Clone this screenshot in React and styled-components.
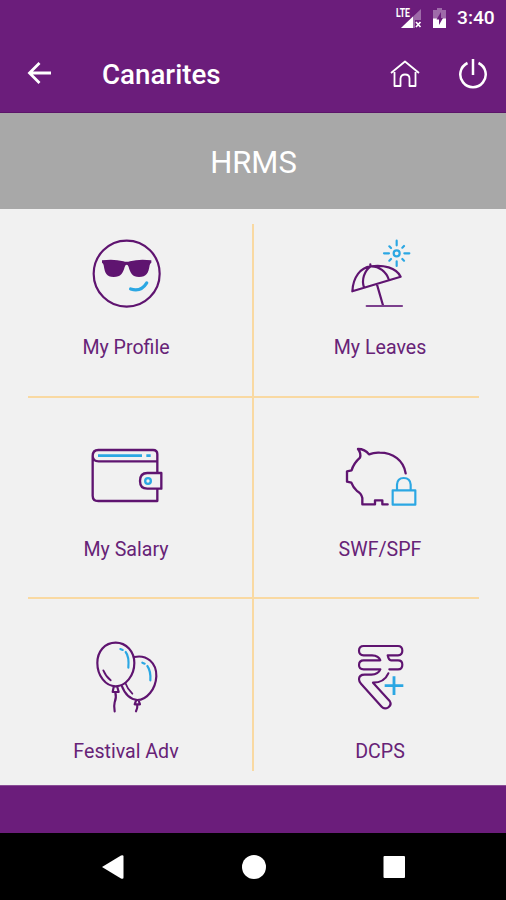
import React from 'react'
import styled, { createGlobalStyle } from 'styled-components';

const purple = '#6b1d7b';
const ink = '#5f1470';
const blue = '#2ba7e3';

const GlobalStyle = createGlobalStyle`
    * {
        box-sizing: border-box;
    }
    body {
        margin: 0;
        background: #000;
        font-family: Roboto, "Liberation Sans", sans-serif;
    }
    svg {
        display: block;
        flex-shrink: 0;
    }
`;

const Screen = styled.div`
    width: 506px;
    height: 900px;
    display: flex;
    flex-direction: column;
    overflow: hidden;
    background: #f1f1f1;
`;

const StatusBar = styled.div`
    height: 36px;
    display: flex;
    justify-content: flex-end;
    align-items: center;
    padding-right: 11px;
    background: ${purple};
    color: #fff;
`;

const Clock = styled.span`
    width: 38px;
    margin-left: 9px;
    font-size: 19.2px;
    font-weight: 500;
    line-height: 36px;
    white-space: nowrap;
`;

const AppBar = styled.header`
    height: 77px;
    display: flex;
    align-items: center;
    padding: 0 18px 0 24px;
    background: ${purple};
    border-bottom: 1px solid #5c1569;
    color: #fff;
`;

const AppTitle = styled.h1`
    flex: 1;
    margin: 0 0 0 48px;
    padding-top: 2px;
    font-size: 27.7px;
    font-weight: 500;
    line-height: 32px;
`;

const Actions = styled.div`
    display: flex;
    align-items: center;
    gap: 38px;
`;

const Banner = styled.h2`
    height: 96px;
    margin: 0;
    padding: 2px 0 0 1px;
    display: flex;
    align-items: center;
    justify-content: center;
    background: #a8a8a8;
    color: #fff;
    font-size: 31px;
    font-weight: 400;
`;

const Menu = styled.main`
    height: 576px;
    padding: 15px 0 14px;
    background: #f1f1f1;
`;

const Row = styled.div`
    display: flex;
    height: ${(p) => p.$height}px;
`;

const Divider = styled.div`
    height: 2px;
    margin: 0 27px 0 28px;
    background: #f9d9a2;
`;

const Cell = styled.div`
    width: ${(p) => (p.$line ? 254 : 252)}px;
    display: flex;
    flex-direction: column;
    align-items: center;
    gap: ${(p) => p.$gap}px;
    padding-top: ${(p) => p.$top}px;
    border-right: ${(p) => (p.$line ? '2px solid #f9d9a2' : 'none')};
`;

const Label = styled.span`
    color: #672377;
    font-size: 19.6px;
    line-height: 26px;
    white-space: nowrap;
`;

const Footer = styled.div`
    height: 48px;
    background: ${purple};
    border-top: 1px solid #8a4d96;
`;

const NavBar = styled.nav`
    flex: 1;
    display: flex;
    justify-content: space-between;
    align-items: center;
    padding: 0 101px 0 102px;
    background: #000;
`;

const Art = ({ x = 0, children }) => (
    <svg width="120" height="80" viewBox={`${x} 30 360 240`} fill="none" stroke={ink} strokeWidth="6.5" strokeLinejoin="round" strokeLinecap="round">
        {children}
    </svg>
)

const Profile = () => (
    <Art x={-12}>
        <circle cx="170" cy="146" r="99" />
        <path fill={ink} stroke="none" d="M96 106 Q132 101 160 109 Q170 112 180 109 Q208 101 244 106 L244 113 Q240 115 239 121 C235 145 230 156 207 156 C187 156 181 144 176 126 Q174 119 170 119 Q166 119 164 126 C159 144 153 156 131 156 C109 156 105 145 101 121 Q100 115 96 113Z" />
        <path stroke={blue} strokeWidth="10" d="M182 192 Q213 202 230 174" />
    </Art>
)

const Leaves = () => (
    <Art>
        <path d="M97 199 C99 156 122 127 152 124 C190 119 228 127 242 155 Z M151 118 V124 M152 124 C133 138 124 163 132 188 M152 124 C177 123 199 140 207 165 M171 179 L189 241" />
        <path stroke="#7c408d" d="M140 243 H246" />
        <g stroke={blue} strokeWidth="6.5">
            <circle cx="230" cy="85" r="9" />
            <path d="M230 47 V61 M230 109 V123 M192 85 H207 M253 85 H268 M208 64 L213 69 M252 63 L247 68 M208 107 L213 102 M252 107 L247 102" />
        </g>
    </Art>
)

const Salary = () => (
    <Art x={-12}>
        <path strokeWidth="7" d="M262 128 V73 Q262 60 249 60 H85 Q68 60 68 78 V197 Q68 213 85 213 H262 V177 M68 78 Q69 94 86 94 H262 M274 129 H232 Q210 129 210 153 Q210 176 232 176 H274 Z" />
        <path stroke={blue} strokeWidth="8" strokeLinecap="butt" d="M84 77 H216 M229 77 H242" />
        <circle cx="234" cy="153" r="8.5" stroke={blue} strokeWidth="7" />
    </Art>
)

const Fund = () => (
    <Art>
        <path strokeWidth="7" d="M257 130 C251 91 219 68 179 68 Q162 67 147 73 Q135 57 114 57 Q124 70 120 83 Q100 101 95 121 L81 124 V155 L94 158 Q99 172 111 183 Q124 190 127 204 V223 H165 V211 H187 V223 H203" />
        <g stroke={blue} strokeWidth="6.5">
            <rect x="218" y="181" width="68" height="43" />
            <path d="M231 180 V164 Q232 144 251 144 Q271 144 272 164 V180" />
        </g>
    </Art>
)

const Festival = () => (
    <Art x={18}>
        <path d="M167 38 C134 38 112 65 112 99 C112 137 137 169 167 169 C197 169 223 137 223 99 C223 65 199 38 167 38Z M161 171 L158 186 H176 L172 171 M166 187 Q170 203 164 217 Q161 228 164 244" />
        <path d="M223 81 C260 73 290 98 289 139 C287 178 260 210 232 210 C207 208 193 188 185 167 M228 212 L224 223 H240 L236 212 M232 224 Q233 234 228 244" />
        <path strokeWidth="5.5" d="M130 121 Q138 140 152 151 M196 159 Q203 178 217 191" />
        <path stroke={blue} d="M181 57 L188 60 M197 66 Q208 80 205 113 M247 98 L254 101 M262 108 Q273 123 271 151" />
    </Art>
)

const Rupee = () => (
    <Art>
        <path d="M208 118 H234 Q247 118 247 104 Q247 91 234 91 H213 Q206 91 203 76 H234 Q247 75 247 62 Q247 48 234 48 H131 Q117 48 117 62 Q117 75 131 76 H156 Q177 77 181 91 H131 Q117 91 117 105 Q117 118 131 118 H181 Q175 133 154 134 H134 Q117 134 117 148 Q117 155 123 161 L185 230 Q193 239 205 232 Q216 224 209 213 L159 158 Q193 158 205 130" />
        <path stroke={blue} strokeWidth="8.5" strokeLinecap="butt" d="M194 167 H250 M222 139 V195" />
    </Art>
)

const App = () => {
    return (
        <Screen>
            <GlobalStyle />
            <StatusBar>
                <svg width="53" height="24" viewBox="0 0 53 24" fill="#fff">
                    <text x="1" y="10.5" fontSize="12" fontWeight="700" textLength="14" lengthAdjust="spacingAndGlyphs">LTE</text>
                    <path opacity=".35" d="M26 3 V14 H20 V22 H6Z" />
                    <path d="M18 10.5 V22 H6Z" />
                    <path stroke="#fff" strokeWidth="1.7" d="M21 16 L25.5 21 M25.5 16 L21 21" />
                    <path opacity=".35" d="M38 4 H42 V2 H47 V4 H51 V13 H38Z" />
                    <path d="M38 12.5 H51 V22 H38Z" />
                    <path fill={purple} d="M46 6 L41.500 13.500 H44 V19 L48 12 H46Z" />
                </svg>
                <Clock>3:40</Clock>
            </StatusBar>
            <AppBar>
                <svg width="30" height="30" viewBox="0 0 30 30" fill="none" stroke="#fff" strokeWidth="2.8">
                    <path d="M27 14 H5.500 M15.500 4 L5.500 14 L15.500 24" />
                </svg>
                <AppTitle>Canarites</AppTitle>
                <Actions>
                    <svg width="30" height="30" viewBox="0 0 30 30" fill="none" stroke="#fff" strokeWidth="1.8" strokeLinejoin="round">
                        <path d="M1 14 L15 2.5 L29 14 M4.5 13 V27 H10.5 V19.5 Q11 15.5 15 15.5 Q19.500 15.5 19.5 19.5 V27 H25.500 V13" />
                    </svg>
                    <svg width="30" height="30" viewBox="0 0 30 30" fill="none" stroke="#fff" strokeWidth="2.5">
                        <path d="M9.500 4 A12.7 12.7 0 1 0 20.500 4 M15 0 V16" />
                    </svg>
                </Actions>
            </AppBar>
            <Banner>HRMS</Banner>
            <Menu>
                <Row $height={172}>
                    <Cell $line $top={11} $gap={20}><Profile /><Label>My Profile</Label></Cell>
                    <Cell $top={11} $gap={20}><Leaves /><Label>My Leaves</Label></Cell>
                </Row>
                <Divider />
                <Row $height={199}>
                    <Cell $line $top={42} $gap={17}><Salary /><Label>My Salary</Label></Cell>
                    <Cell $top={42} $gap={17}><Fund /><Label>SWF/SPF</Label></Cell>
                </Row>
                <Divider />
                <Row $height={172}>
                    <Cell $line $top={41} $gap={19}><Festival /><Label>Festival Adv</Label></Cell>
                    <Cell $top={41} $gap={19}><Rupee /><Label>DCPS</Label></Cell>
                </Row>
            </Menu>
            <Footer />
            <NavBar>
                <svg width="22" height="26" viewBox="0 0 22 26" fill="#fff"><path d="M0 13 L19 1.500 Q21.500 0.500 21.500 2.500 V23.500 Q21.500 25.500 19 24.500Z" /></svg>
                <svg width="24" height="24" viewBox="0 0 24 24" fill="#fff"><circle cx="12" cy="12" r="12" /></svg>
                <svg width="22" height="22" viewBox="0 0 22 22" fill="#fff"><rect x="0.500" width="21.500" height="22" rx="1" /></svg>
            </NavBar>
        </Screen>
    )
}

export default App
